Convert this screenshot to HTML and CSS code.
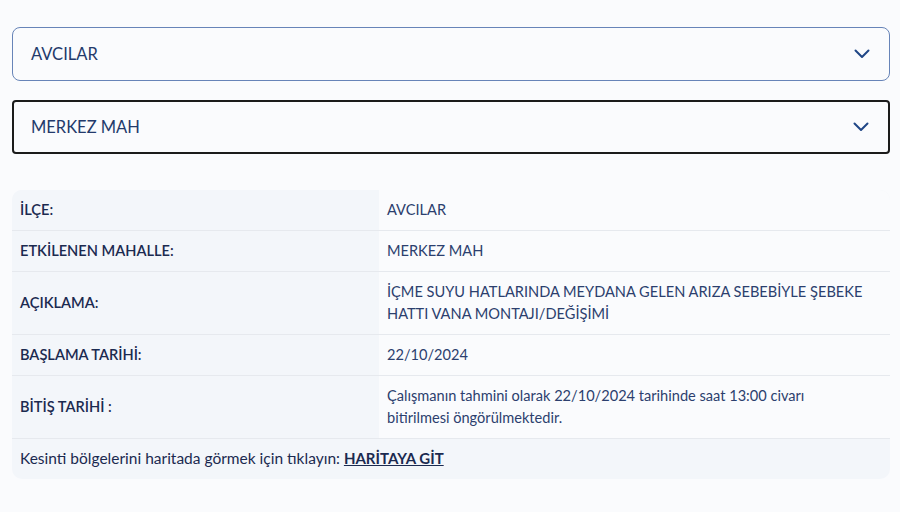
FILE: index.html
```html
<!DOCTYPE html>
<html lang="tr">
<head>
    <meta charset="UTF-8">
    <meta name="viewport" content="width=device-width, initial-scale=1.0">
    <title>Su Kesintileri</title>
    <link rel="stylesheet" href="styles.css">
</head>
<body>
    <div class="page">
        <div class="select select-district">
            <span>AVCILAR</span>
            <svg class="chevron" width="16" height="10" viewBox="0 0 16 10"><path d="M1.5 1.5 L8 8 L14.5 1.5" fill="none" stroke="#1f4686" stroke-width="2" stroke-linecap="round" stroke-linejoin="round"/></svg>
        </div>
        <div class="select select-hood">
            <span>MERKEZ MAH</span>
            <svg class="chevron" width="16" height="10" viewBox="0 0 16 10"><path d="M1.5 1.5 L8 8 L14.5 1.5" fill="none" stroke="#1f4686" stroke-width="2" stroke-linecap="round" stroke-linejoin="round"/></svg>
        </div>

        <div class="info-card">
            <table class="info-table">
                <tr>
                    <th>İLÇE:</th>
                    <td>AVCILAR</td>
                </tr>
                <tr>
                    <th>ETKİLENEN MAHALLE:</th>
                    <td>MERKEZ MAH</td>
                </tr>
                <tr>
                    <th>AÇIKLAMA:</th>
                    <td>İÇME SUYU HATLARINDA MEYDANA GELEN ARIZA SEBEBİYLE ŞEBEKE HATTI VANA MONTAJI/DEĞİŞİMİ</td>
                </tr>
                <tr>
                    <th>BAŞLAMA TARİHİ:</th>
                    <td>22/10/2024</td>
                </tr>
                <tr>
                    <th>BİTİŞ TARİHİ :</th>
                    <td>Çalışmanın tahmini olarak 22/10/2024 tarihinde saat 13:00 civarı bitirilmesi öngörülmektedir.</td>
                </tr>
            </table>
            <div class="map-link">
                Kesinti bölgelerini haritada görmek için tıklayın: <a href="#">HARİTAYA GİT</a>
            </div>
        </div>
    </div>
</body>
</html>
```

FILE: styles.css
```css
* {
    margin: 0;
    padding: 0;
    box-sizing: border-box;
}

body {
    font-family: Lato, "Open Sans", sans-serif;
    background-color: #fafbfd;
    color: #1d2d55;
}

.page {
    padding: 27px 10px 0 12px;
}

.select {
    display: flex;
    align-items: center;
    justify-content: space-between;
    height: 54px;
    padding: 0 18px;
    background-color: #fafbfd;
    font-size: 16.5px;
    color: #233a6b;
}

.select-district {
    border: 1px solid #6784b8;
    border-radius: 8px;
    margin-bottom: 19px;
}

.select-hood {
    border: 2px solid #1b1b1b;
    border-radius: 4px;
    padding-left: 17px;
}

.select span {
    margin-top: -1px;
}

.chevron {
    margin-right: 1px;
}

.info-card {
    margin-top: 36px;
    background-color: #f3f6fa;
    border-radius: 10px;
    overflow: hidden;
}

.info-table {
    width: 100%;
    border-collapse: collapse;
    font-size: 14.6px;
}

.info-table tr {
    border-bottom: 1px solid #e6e9ee;
}

.info-table th,
.info-table td {
    padding: 9px 8px;
    line-height: 22px;
    text-align: left;
    vertical-align: middle;
}

.info-table th {
    width: 367px;
    font-weight: 600;
    color: #1b2a50;
    background-color: #f3f6fa;
}

.info-table td {
    padding-right: 24px;
    font-weight: 400;
    color: #2c3f6e;
    background-color: #fafbfd;
}

.map-link {
    padding: 10px 8px 12px;
    font-size: 15.5px;
    line-height: 18px;
    color: #1b2a50;
}

.map-link a {
    color: #1b2a50;
    font-weight: 700;
    font-size: 15px;
    text-decoration: underline;
}
```
